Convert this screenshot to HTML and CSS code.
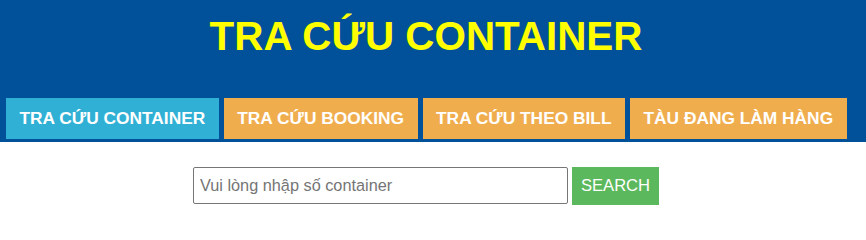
FILE: index.html
```html
<!DOCTYPE html>
<html lang="vi">
<head>
<meta charset="utf-8">
<title>Tra cứu container</title>
<link rel="stylesheet" href="styles.css">
</head>
<body>
<header class="header">
  <h1 class="title">TRA CỨU CONTAINER</h1>
  <nav class="tabs">
    <a class="tab tab-active" href="#">TRA CỨU CONTAINER</a>
    <a class="tab" href="#">TRA CỨU BOOKING</a>
    <a class="tab" href="#">TRA CỨU THEO BILL</a>
    <a class="tab" href="#">TÀU ĐANG LÀM HÀNG</a>
  </nav>
</header>
<main class="search">
  <input class="search-input" type="text" placeholder="Vui lòng nhập số container">
  <button class="search-btn" type="button">SEARCH</button>
</main>
</body>
</html>
```
FILE: styles.css
```css
html, body {
  margin: 0;
  padding: 0;
  background: #ffffff;
  font-family: "Liberation Sans", Arial, sans-serif;
}

.header {
  background: #01509a;
  padding: 13px 0 3px 0;
}

.title {
  width: 852px;
  margin: 0;
  text-align: center;
  font-size: 40.4px;
  line-height: 46px;
  font-weight: bold;
  color: #ffff00;
}

.tabs {
  display: flex;
  gap: 5px;
  padding-left: 6px;
  margin-top: 39px;
}

.tab {
  display: flex;
  align-items: center;
  height: 41px;
  padding: 0 13.5px;
  background: #f0ad4e;
  color: #ffffff;
  font-size: 17.33px;
  font-weight: bold;
  text-decoration: none;
  white-space: nowrap;
}

.tab-active {
  background: #31b0d5;
}

.search {
  width: 852px;
  display: flex;
  justify-content: center;
  align-items: flex-start;
  gap: 4px;
  padding-top: 25px;
}

.search-input {
  box-sizing: border-box;
  width: 375px;
  height: 37px;
  margin: 0;
  padding: 0 6px;
  border: 1px solid #767676;
  border-radius: 2px;
  font-family: "Liberation Sans", Arial, sans-serif;
  font-size: 16.3px;
  color: #333333;
}

.search-input::placeholder {
  color: #757575;
}

.search-btn {
  box-sizing: border-box;
  width: 87px;
  height: 38px;
  margin: 0;
  padding: 0;
  border: none;
  background: #5cb85c;
  color: #ffffff;
  font-family: "Liberation Sans", Arial, sans-serif;
  font-size: 16.6px;
}
```
